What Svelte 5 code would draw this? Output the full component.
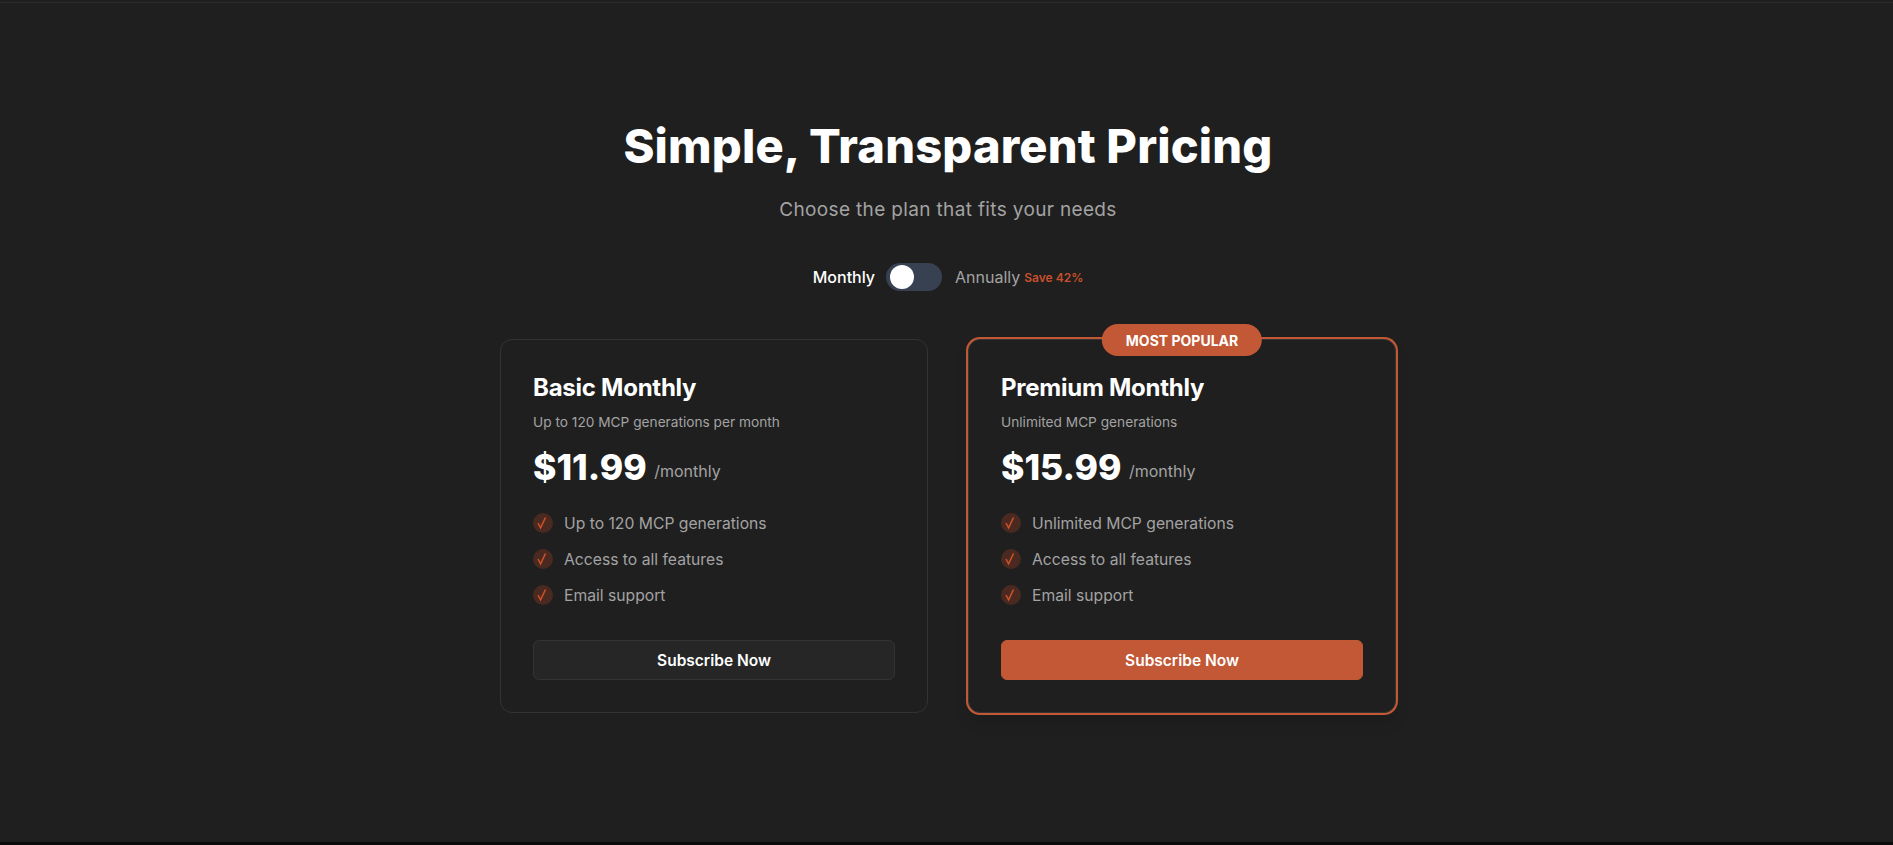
<script>
  const plans = [
    {
      name: 'Basic Monthly',
      desc: 'Up to 120 MCP generations per month',
      price: '$11.99',
      features: ['Up to 120 MCP generations', 'Access to all features', 'Email support'],
      popular: false
    },
    {
      name: 'Premium Monthly',
      desc: 'Unlimited MCP generations',
      price: '$15.99',
      features: ['Unlimited MCP generations', 'Access to all features', 'Email support'],
      popular: true
    }
  ];
</script>

<div class="page">
  <div class="topline"></div>
  <main class="pricing">
    <h1>Simple, Transparent Pricing</h1>
    <p class="subtitle">Choose the plan that fits your needs</p>

    <div class="billing">
      <span class="monthly">Monthly</span>
      <div class="track"><div class="knob"></div></div>
      <span class="annually">Annually</span>
      <span class="save">Save 42%</span>
    </div>

    <div class="plans">
      {#each plans as plan}
        <div class="card" class:popular={plan.popular}>
          {#if plan.popular}
            <div class="badge">MOST POPULAR</div>
          {/if}
          <h2>{plan.name}</h2>
          <p class="desc">{plan.desc}</p>
          <div class="price">
            <span class="amount">{plan.price}</span>
            <span class="period">/monthly</span>
          </div>
          <ul>
            {#each plan.features as feature}
              <li>
                <span class="check">
                  <svg viewBox="0 0 20 20" width="20" height="20" fill="none">
                    <path d="M5 10 L7.6 14.8 L12.5 4.5" stroke="#cf5229" stroke-width="1.5" />
                  </svg>
                </span>
                {feature}
              </li>
            {/each}
          </ul>
          <button class="subscribe">Subscribe Now</button>
        </div>
      {/each}
    </div>
  </main>
  <div class="bottomline"></div>
</div>

<style>
  :global(body) {
    background: #1f1f1f;
    font-family: Inter, "Liberation Sans", sans-serif;
  }

  .page {
    height: 845px;
    display: flex;
    flex-direction: column;
    overflow: hidden;
    background: #1f1f1f;
  }

  .topline {
    height: 1px;
    margin-top: 2px;
    background: #2b2b2b;
  }

  .pricing {
    flex: 1;
    display: flex;
    flex-direction: column;
    align-items: center;
    padding: 115px 0 0 3px;
  }

  h1 {
    margin: 0;
    font-size: 47px;
    line-height: 56px;
    letter-spacing: 0.17px;
    font-weight: 800;
    color: #fff;
  }

  .subtitle {
    margin: 22px 0 0;
    font-size: 19px;
    line-height: 28px;
    letter-spacing: 0.35px;
    color: #a3a3a3;
  }

  .billing {
    display: flex;
    align-items: center;
    margin-top: 39px;
    height: 28px;
    font-size: 16px;
  }

  .monthly {
    color: #fff;
    font-weight: 500;
  }

  .track {
    width: 56px;
    height: 28px;
    margin: 0 13px 0 11px;
    border-radius: 14px;
    background: #374151;
    display: flex;
    align-items: center;
    padding-left: 4px;
    box-sizing: border-box;
  }

  .knob {
    width: 24px;
    height: 24px;
    border-radius: 50%;
    background: #fff;
  }

  .annually {
    color: #a3a3a3;
  }

  .save {
    margin-left: 4px;
    font-size: 12px;
    font-weight: 600;
    color: #c8502c;
  }

  .plans {
    display: flex;
    gap: 40px;
    margin-top: 48px;
  }

  .card {
    position: relative;
    width: 428px;
    height: 374px;
    box-sizing: border-box;
    padding: 32px;
    border: 1px solid #333;
    border-radius: 12px;
    background: #1f1f1f;
  }

  .popular {
    box-shadow: 0 0 0 2px #c25835, 0 10px 15px rgba(0, 0, 0, 0.1);
  }

  .badge {
    position: absolute;
    top: -16px;
    left: 50%;
    transform: translateX(-50%);
    height: 32px;
    padding: 0 24px;
    display: flex;
    align-items: center;
    border-radius: 16px;
    background: #c25835;
    color: #fff;
    font-size: 14px;
    font-weight: 700;
    white-space: nowrap;
  }

  h2 {
    margin: 0;
    font-size: 24px;
    line-height: 32px;
    letter-spacing: -0.25px;
    font-weight: 700;
    color: #fff;
  }

  .desc {
    margin: 8px 0 0;
    font-size: 13.7px;
    line-height: 20px;
    color: #a3a3a3;
  }

  .price {
    margin-top: 16px;
    height: 40px;
    line-height: 40px;
  }

  .amount {
    font-size: 35.5px;
    font-weight: 800;
    color: #fff;
  }

  .period {
    margin-left: 3px;
    vertical-align: 3px;
    font-size: 16px;
    color: #a3a3a3;
  }

  ul {
    list-style: none;
    margin: 17px 0 0;
    padding: 0;
  }

  li {
    display: flex;
    align-items: center;
    gap: 11px;
    height: 36px;
    font-size: 15.7px;
    color: #a3a3a3;
  }

  .check {
    width: 20px;
    height: 20px;
    border-radius: 50%;
    background: #4a2a20;
    flex: none;
  }

  .check svg {
    display: block;
  }

  .subscribe {
    display: block;
    width: 100%;
    height: 40px;
    margin-top: 27px;
    border: 1px solid #333;
    border-radius: 6px;
    background: #262626;
    color: #fff;
    font-family: inherit;
    font-size: 15.5px;
    font-weight: 600;
  }

  .popular .subscribe {
    background: #c25835;
    border-color: #c25835;
  }

  .bottomline {
    height: 3px;
    background: #0a0a0a;
  }
</style>
